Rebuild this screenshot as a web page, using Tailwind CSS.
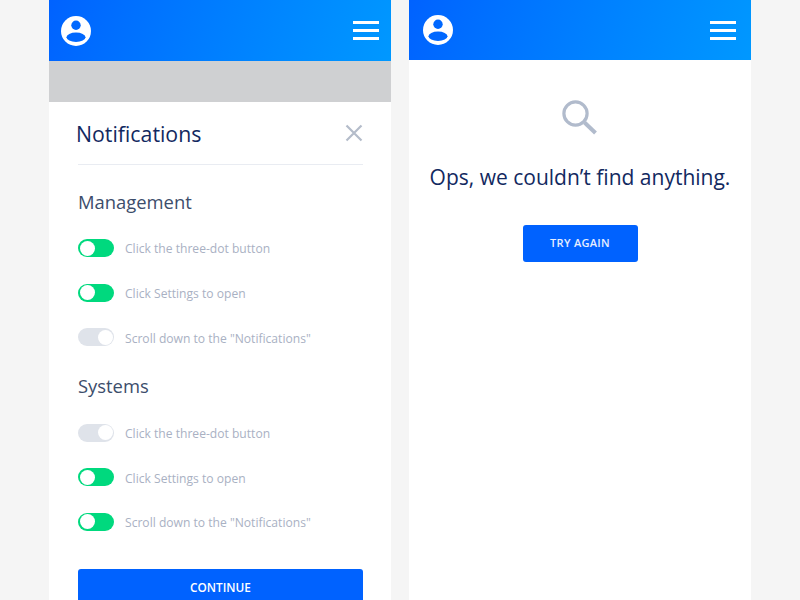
<!DOCTYPE html>
<html lang="en">
<head>
  <meta charset="UTF-8" />
  <title>Notifications</title>
  <script src="https://cdn.jsdelivr.net/npm/@tailwindcss/browser@4"></script>
</head>
<body class="h-[600px] overflow-hidden bg-[#f5f5f5] font-['Open_Sans',sans-serif]">
  <div class="flex h-[600px] gap-[18px] pl-[49px]">

    <!-- left phone -->
    <div class="flex h-[600px] w-[342px] flex-col overflow-hidden bg-white">
      <div class="flex h-[61px] shrink-0 items-center justify-between bg-linear-110 from-[#0062ff] to-[#0098ff] px-[12px]">
        <svg width="30" height="30" viewBox="0 0 30 30"><circle cx="15" cy="15" r="15" fill="#fff"/><circle cx="15" cy="9.2" r="4.7" fill="#0068ff"/><ellipse cx="15" cy="21.2" rx="9.5" ry="4.7" fill="#0068ff"/></svg>
        <div class="flex w-[26px] flex-col gap-[5px]">
          <div class="h-[3px] bg-white"></div>
          <div class="h-[3px] bg-white"></div>
          <div class="h-[3px] bg-white"></div>
        </div>
      </div>
      <div class="h-[41px] shrink-0 bg-[#cfd0d2]"></div>

      <div class="pl-[29px] pr-[28px]">
        <div class="flex h-[63px] items-center justify-between border-b border-[#e9ecf2]">
          <h1 class="ml-[-2px] mt-[1px] text-[21.3px] text-[#12295f]">Notifications</h1>
          <svg width="18" height="18" viewBox="0 0 18 18"><path d="M1.5 1.5 16.5 16.5M16.5 1.5 1.5 16.5" stroke="#b4bcca" stroke-width="2.2" fill="none"/></svg>
        </div>

        <h2 class="mt-[23px] h-[28px] text-[18.4px] leading-[28px] text-[#3c4d6b]">Management</h2>
        <div class="mt-[23px] flex flex-col gap-[26.7px]">
          <div class="flex h-[18px] items-center gap-[11px]">
            <div class="flex h-[18px] w-[36px] items-center rounded-full bg-[#00d97e] pl-[1.5px]"><div class="size-[15px] rounded-full bg-white"></div></div>
            <span class="pt-[3px] text-[12.1px] text-[#a9b1c3]">Click the three-dot button</span>
          </div>
          <div class="flex h-[18px] items-center gap-[11px]">
            <div class="flex h-[18px] w-[36px] items-center rounded-full bg-[#00d97e] pl-[1.5px]"><div class="size-[15px] rounded-full bg-white"></div></div>
            <span class="pt-[3px] text-[12.1px] text-[#a9b1c3]">Click Settings to open</span>
          </div>
          <div class="flex h-[18px] items-center gap-[11px]">
            <div class="flex h-[18px] w-[36px] items-center justify-end rounded-full bg-[#dfe3ea] pr-[1.5px]"><div class="size-[15px] rounded-full bg-white"></div></div>
            <span class="pt-[3px] text-[12.1px] text-[#a9b1c3]">Scroll down to the "Notifications"</span>
          </div>
        </div>

        <h2 class="mt-[25.6px] h-[28px] text-[18.4px] leading-[28px] text-[#3c4d6b]">Systems</h2>
        <div class="mt-[24px] flex flex-col gap-[26.5px]">
          <div class="flex h-[18px] items-center gap-[11px]">
            <div class="flex h-[18px] w-[36px] items-center justify-end rounded-full bg-[#dfe3ea] pr-[1.5px]"><div class="size-[15px] rounded-full bg-white"></div></div>
            <span class="pt-[3px] text-[12.1px] text-[#a9b1c3]">Click the three-dot button</span>
          </div>
          <div class="flex h-[18px] items-center gap-[11px]">
            <div class="flex h-[18px] w-[36px] items-center rounded-full bg-[#00d97e] pl-[1.5px]"><div class="size-[15px] rounded-full bg-white"></div></div>
            <span class="pt-[3px] text-[12.1px] text-[#a9b1c3]">Click Settings to open</span>
          </div>
          <div class="flex h-[18px] items-center gap-[11px]">
            <div class="flex h-[18px] w-[36px] items-center rounded-full bg-[#00d97e] pl-[1.5px]"><div class="size-[15px] rounded-full bg-white"></div></div>
            <span class="pt-[3px] text-[12.1px] text-[#a9b1c3]">Scroll down to the "Notifications"</span>
          </div>
        </div>

        <button class="mt-[38px] flex h-[36px] w-full items-center justify-center rounded-[3px] bg-[#0062ff] pt-[2px] text-[11.8px] font-semibold text-white">CONTINUE</button>
      </div>
    </div>

    <!-- right phone -->
    <div class="flex h-[600px] w-[342px] flex-col bg-white">
      <div class="flex h-[60px] shrink-0 items-center justify-between bg-linear-110 from-[#0062ff] to-[#0098ff] pl-[14px] pr-[15px]">
        <svg width="30" height="30" viewBox="0 0 30 30"><circle cx="15" cy="15" r="15" fill="#fff"/><circle cx="15" cy="9.2" r="4.7" fill="#0068ff"/><ellipse cx="15" cy="21.2" rx="9.5" ry="4.7" fill="#0068ff"/></svg>
        <div class="flex w-[26px] flex-col gap-[5px]">
          <div class="h-[3px] bg-white"></div>
          <div class="h-[3px] bg-white"></div>
          <div class="h-[3px] bg-white"></div>
        </div>
      </div>
      <div class="flex flex-col items-center">
        <svg width="36" height="36" viewBox="0 0 36 36" class="mt-[40px]"><circle cx="13.5" cy="13.5" r="11.6" stroke="#b1bbcc" stroke-width="3.2" fill="none"/><path d="M22.5 22.5 33.5 33" stroke="#b1bbcc" stroke-width="4" fill="none"/></svg>
        <p class="mt-[26px] text-[21px] leading-[30px] text-[#12295f]">Ops, we couldn’t find anything.</p>
        <button class="mt-[33px] flex h-[37px] w-[115px] items-center justify-center rounded-[3px] bg-[#0062ff] text-[11px] font-semibold tracking-[0.3px] text-[#e6eeff]">TRY AGAIN</button>
      </div>
    </div>
  </div>
</body>
</html>
